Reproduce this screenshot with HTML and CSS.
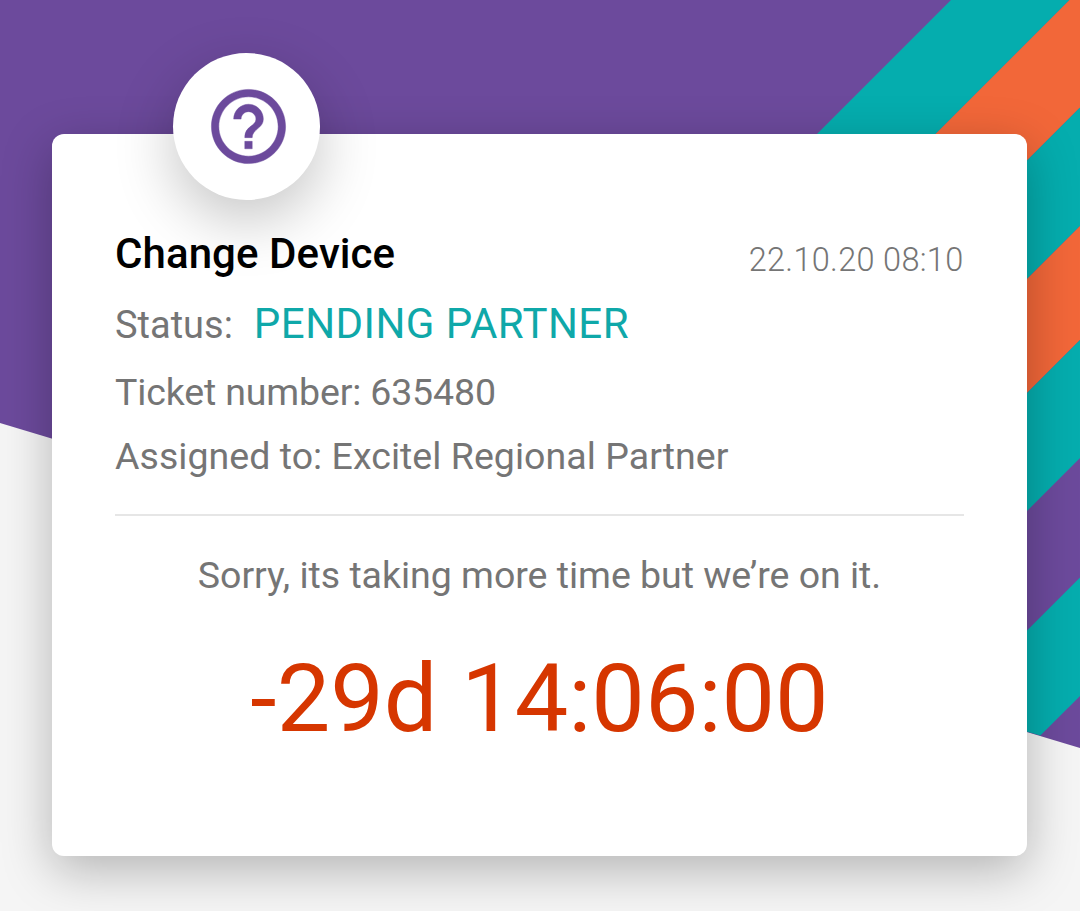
FILE: index.html
```
<!DOCTYPE html>
<html>

<head>
	<meta charset="UTF-8">
	<title>Change Device</title>
	<link rel="stylesheet" href="styles.css">
</head>

<body>
	<svg class="bg" viewBox="0 0 1080 911">
		<path fill="#6c4a9c" d="M0 0H1080V748L0 423z" />
		<path fill="#05adae" d="M951 0H1069.500L750 319.500V201z" />
		<path fill="#f26739" d="M1069.500 0H1080V107.500L900 287.500V169.500z" />
		<path fill="#05adae" d="M1080 107.500V226L980 326V207.500z" />
		<path fill="#f26739" d="M1080 226V340L980 440V326z" />
		<path fill="#05adae" d="M1080 340V458L980 558V440z" />
		<path fill="#05adae" d="M1080 577.500V696L1040.400 735.600L980 718V677.500z" />
	</svg>

	<div class="card">
		<div class="icon">
			<svg viewBox="0 0 24 24">
				<path d="M11 18h2v-2h-2v2zm1-16C6.480 2 2 6.480 2 12s4.480 10 10 10 10-4.480 10-10S17.520 2 12 2zm0 18c-4.410 0-8-3.590-8-8s3.590-8 8-8 8 3.590 8 8-3.590 8-8 8zm0-14c-2.210 0-4 1.790-4 4h2c0-1.100.9-2 2-2s2 .9 2 2c0 2-3 1.750-3 5h2c0-2.250 3-2.500 3-5 0-2.210-1.790-4-4-4z" />
			</svg>
		</div>
		<div class="head">
			<h1>Change Device</h1>
			<time>22.10.20 08:10</time>
		</div>
		<p class="status"><span>Status:</span><b>PENDING PARTNER</b></p>
		<p class="number">Ticket number: 635480</p>
		<p class="assigned">Assigned to: Excitel Regional Partner</p>
		<div class="line"></div>
		<p class="sorry">Sorry, its taking more time but we’re on it.</p>
		<div class="countdown">-29d 14:06:00</div>
	</div>
</body>

</html>
```
FILE: styles.css
```
html,
body {
	width: 100%;
	height: 100%;
	margin: 0;
}

body {
	display: flow-root;
	background: #f5f5f5;
	font-family: Roboto, "Liberation Sans", sans-serif;
	color: #757575;
	overflow: hidden;
}

h1,
p {
	margin: 0;
}

.bg {
	position: absolute;
	left: 0;
	top: 0;
	width: 1080px;
	height: 911px;
}

.card {
	position: relative;
	display: flow-root;
	width: 975px;
	height: 722px;
	margin: 134px 0 0 52px;
	padding: 95px 63px 0;
	box-sizing: border-box;
	border-radius: 12px;
	background: #fff;
	box-shadow: 0 14px 50px rgba(0, 0, 0, .27);
}

/* round badge over the top edge */
.icon {
	position: absolute;
	left: 121px;
	top: -81px;
	width: 147px;
	height: 147px;
	border-radius: 50%;
	background: #fff;
	box-shadow: 0 20px 60px rgba(0, 0, 0, .23);
}

.icon svg {
	display: block;
	width: 89px;
	height: 89px;
	margin: 29px 0 0 31px;
	fill: #6c4a9c;
	stroke: #6c4a9c;
	stroke-width: .12;
}

.head {
	position: relative;
	display: flex;
	justify-content: space-between;
	height: 50px;
	line-height: 50px;
}

h1 {
	font-size: 42px;
	font-weight: 500;
	letter-spacing: .08px;
	color: #000;
}

time {
	margin-right: .5px;
	padding-top: 6px;
	font-size: 32.5px;
	font-weight: 300;
	letter-spacing: .3px;
}

p {
	font-size: 37.5px;
	line-height: 64px;
	white-space: nowrap;
}

.status {
	display: flex;
	align-items: baseline;
	height: 64px;
	margin: 13px 0 4px;
}

.status span {
	font-size: 38px;
}

.status b {
	margin-left: 21px;
	font-size: 42px;
	font-weight: 400;
	letter-spacing: .45px;
	color: #0fa8a9;
}

.number {
	letter-spacing: -.15px;
}

.assigned {
	letter-spacing: .04px;
}

.line {
	height: 2px;
	margin: 26px 0 27px;
	background: #e6e6e6;
}

.sorry {
	text-align: center;
	letter-spacing: -.03px;
}

.countdown {
	margin-top: 36px;
	font-size: 95.3px;
	line-height: 112px;
	text-align: center;
	white-space: nowrap;
	color: #d63600;
}
```
